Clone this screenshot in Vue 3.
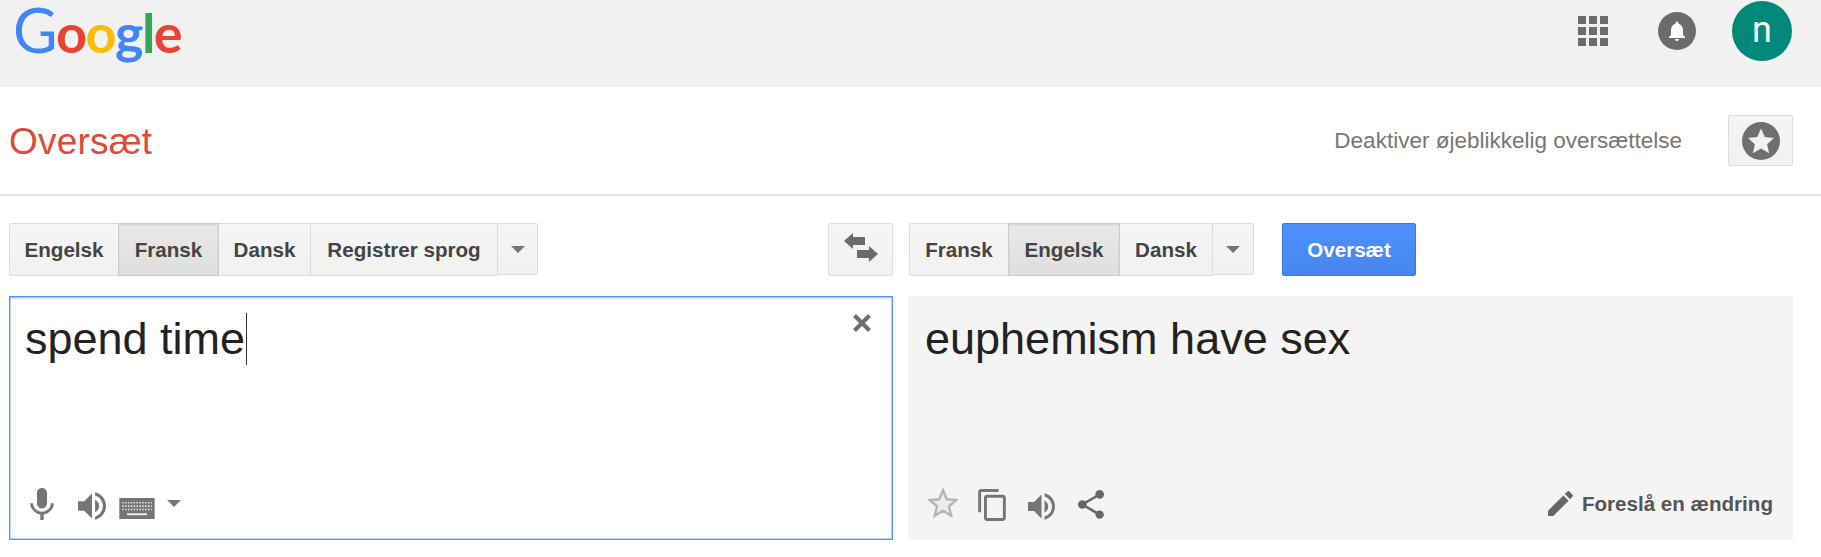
<script setup>
// button widths come from the language list, each one is a different size
const sourceLangs = [
  { name: 'Engelsk', w: 110 },
  { name: 'Fransk', w: 101, active: true },
  { name: 'Dansk', w: 93 },
  { name: 'Registrer sprog', w: 188 },
]
const targetLangs = [
  { name: 'Fransk', w: 100 },
  { name: 'Engelsk', w: 112, active: true },
  { name: 'Dansk', w: 94 },
]
const logo = [
  { ch: 'G', color: '#4285f4' },
  { ch: 'o', color: '#ea4335' },
  { ch: 'o', color: '#fbbc05' },
  { ch: 'g', color: '#4285f4' },
  { ch: 'l', color: '#34a853' },
  { ch: 'e', color: '#ea4335' },
]
const speaker = 'M3 9v6h4l5 5V4L7 9H3zm13.5 3c0-1.77-1.02-3.29-2.5-4.03v8.05c1.48-.73 2.5-2.25 2.5-4.02zM14 3.23v2.06c2.89.86 5 3.54 5 6.71s-2.11 5.85-5 6.71v2.06c4.01-.91 7-4.49 7-8.77s-2.99-7.86-7-8.77z'
</script>

<template>
  <div class="page">
    <header class="topbar">
      <div class="logo"><span v-for="(l, i) in logo" :key="i" :style="{ color: l.color }">{{ l.ch }}</span></div>
      <div class="top-right">
        <div class="apps"><i v-for="n in 9" :key="n" /></div>
        <div class="bell">
          <svg viewBox="0 0 24 24" width="24" height="24"><path fill="#fff" d="M12 22c1.1 0 2-.9 2-2h-4c0 1.1.9 2 2 2zm6-6v-5c0-3.07-1.63-5.64-4.5-6.32V4c0-.83-.67-1.5-1.5-1.5s-1.5.67-1.5 1.5v.68C7.64 5.36 6 7.92 6 11v5l-2 2v1h16v-1l-2-2z" /></svg>
        </div>
        <div class="avatar">n</div>
      </div>
    </header>

    <div class="subbar">
      <div class="title">Oversæt</div>
      <div class="sub-right">
        <span class="instant">Deaktiver øjeblikkelig oversættelse</span>
        <button class="btn star-btn">
          <svg viewBox="0 0 38 38" width="38" height="38">
            <circle cx="19" cy="19" r="19" fill="#6f6f6f" />
            <polygon fill="#f1f1f1" points="19,6.5 22.8,15 32,16 25.1,22.2 27.1,31.3 19,26.6 10.9,31.3 12.9,22.2 6,16 15.2,15" />
          </svg>
        </button>
      </div>
    </div>

    <main class="translator">
      <section class="col col-left">
        <div class="toolbar">
          <div class="langs">
            <button v-for="l in sourceLangs" :key="l.name" class="btn lang" :class="{ active: l.active }" :style="{ width: l.w + 'px' }">{{ l.name }}</button>
            <button class="btn more"><i class="caret" /></button>
          </div>
          <button class="btn swap">
            <svg viewBox="0 0 34 30" width="34" height="30">
              <path fill="#6b6b6b" d="M0 8 9 0v4h12v8H9v4z" />
              <path fill="#6b6b6b" d="M34 21l-9-8v4H13v8h12v4z" />
            </svg>
          </button>
        </div>
        <div class="box source">
          <div class="text">spend time<span class="cursor" /></div>
          <svg class="clear" viewBox="0 0 20 20" width="20" height="20">
            <path d="M2.5 2.5l15 15M17.5 2.5l-15 15" stroke="#6f6f6f" stroke-width="4.2" fill="none" />
          </svg>
          <div class="box-foot">
            <svg class="mic" viewBox="5 2 14 19" width="24" height="32"><path fill="#757575" d="M12 14c1.66 0 2.99-1.34 2.99-3L15 5c0-1.66-1.34-3-3-3S9 3.34 9 5v6c0 1.66 1.34 3 3 3zm5.3-3c0 3-2.54 5.1-5.3 5.1S6.7 14 6.7 11H5c0 3.41 2.72 6.23 6 6.72V21h2v-3.28c3.28-.48 6-3.3 6-6.72h-1.7z" /></svg>
            <svg class="vol" viewBox="3 3 18 18" width="28" height="28"><path fill="#757575" :d="speaker" /></svg>
            <svg class="kbd" viewBox="0 0 37 22" width="36" height="21">
              <rect width="37" height="22" fill="#757575" />
              <path d="M3 5h31M3 8.5h31M3 12h31" stroke="#e4e4e4" stroke-width="1.6" stroke-dasharray="1.6 1.4" />
              <rect x="8" y="16" width="21" height="2" fill="#eee" />
            </svg>
            <i class="caret kbd-caret" />
          </div>
        </div>
      </section>

      <section class="col">
        <div class="toolbar">
          <div class="langs">
            <button v-for="l in targetLangs" :key="l.name" class="btn lang" :class="{ active: l.active }" :style="{ width: l.w + 'px' }">{{ l.name }}</button>
            <button class="btn more"><i class="caret" /></button>
          </div>
          <button class="btn primary">Oversæt</button>
        </div>
        <div class="box result">
          <div class="text">euphemism have sex</div>
          <div class="box-foot">
            <svg class="r-star" viewBox="1.5 1.5 27 27" width="30" height="30"><polygon fill="#ececec" stroke="#b5b5b5" stroke-width="2.2" points="15,3.5 18.4,11.6 27,12.3 20.4,18 22.4,26.5 15,22 7.6,26.5 9.6,18 3,12.3 11.6,11.6" /></svg>
            <svg class="r-copy" viewBox="2 1 19 22" width="28" height="32"><path fill="#757575" d="M16 1H4c-1.1 0-2 .9-2 2v14h2V3h12V1zm3 4H8c-1.1 0-2 .9-2 2v14c0 1.1.9 2 2 2h11c1.1 0 2-.9 2-2V7c0-1.1-.9-2-2-2zm0 16H8V7h11v14z" /></svg>
            <svg class="r-vol" viewBox="3 3 18 18" width="27" height="27"><path fill="#757575" :d="speaker" /></svg>
            <svg class="r-share" viewBox="3 2 18 20" width="26" height="29"><path fill="#666" d="M18 16.08c-.76 0-1.44.3-1.96.77L8.91 12.7c.05-.23.09-.46.09-.7s-.04-.47-.09-.7l7.05-4.11c.54.5 1.25.81 2.04.81 1.66 0 3-1.34 3-3s-1.34-3-3-3-3 1.34-3 3c0 .24.04.47.09.7L8.04 9.81C7.5 9.31 6.79 9 6 9c-1.66 0-3 1.34-3 3s1.34 3 3 3c.79 0 1.5-.31 2.04-.81l7.12 4.16c-.05.21-.08.43-.08.65 0 1.61 1.31 2.92 2.92 2.92 1.61 0 2.92-1.31 2.92-2.92s-1.31-2.92-2.92-2.92z" /></svg>
            <div class="suggest">
              <svg viewBox="3 3 18 18" width="25" height="25"><path fill="#666" d="M3 17.25V21h3.75L17.81 9.94l-3.75-3.75L3 17.25zM20.71 7.04c.39-.39.39-1.02 0-1.41l-2.34-2.34c-.39-.39-1.02-.39-1.41 0l-1.83 1.83 3.75 3.75 1.83-1.83z" /></svg>
              <span>Foreslå en ændring</span>
            </div>
          </div>
        </div>
      </section>
    </main>
  </div>
</template>

<style>
html, body {
  margin: 0;
  background: #fff;
}
</style>

<style scoped>
.page {
  width: 1821px;
  height: 557px;
  overflow: hidden;
  font-family: "Liberation Sans", Arial, sans-serif;
  color: #444;
}

.topbar {
  height: 87px;
  background: #f1f1f1;
  display: flex;
  align-items: flex-start;
  justify-content: space-between;
  padding: 0 29px 0 13px;
  box-sizing: border-box;
}
.logo {
  font-family: Lato, sans-serif;
  font-size: 54px;
  font-weight: 700;
  line-height: 60px;
  letter-spacing: -1.5px;
}
.logo span:first-child {
  font-size: 61px;
  font-weight: 400;
}
.top-right {
  display: flex;
  align-items: center;
  height: 61px;
}
.apps {
  display: grid;
  grid-template-columns: repeat(3, 8px);
  grid-auto-rows: 8px;
  gap: 3px;
  margin-right: 50px;
}
.apps i {
  background: #6b6b6b;
}
.bell {
  width: 38px;
  height: 38px;
  border-radius: 50%;
  background: #6b6b6b;
  display: flex;
  align-items: center;
  justify-content: center;
  margin-right: 36px;
}
.avatar {
  width: 60px;
  height: 60px;
  border-radius: 50%;
  background: #00897b;
  color: #fff;
  font-family: Roboto, sans-serif;
  font-size: 36px;
  line-height: 58px;
  text-align: center;
}

.subbar {
  height: 109px;
  box-sizing: border-box;
  border-bottom: 2px solid #e5e5e5;
  display: flex;
  align-items: center;
  justify-content: space-between;
  padding: 0 28px 0 9px;
}
.title {
  font-size: 37px;
  letter-spacing: 0.2px;
  color: #dd4b39;
  margin-top: 3px;
}
.sub-right {
  display: flex;
  align-items: center;
}
.instant {
  font-size: 22.5px;
  color: #777;
  margin-right: 46px;
}

.btn {
  font-family: inherit;
  font-size: 20.6px;
  font-weight: 700;
  color: #444;
  height: 53px;
  padding: 0;
  margin: 0;
  box-sizing: border-box;
  border: 1px solid #dcdcdc;
  border-radius: 2px;
  background: linear-gradient(#f5f5f5, #f1f1f1);
  display: flex;
  align-items: center;
  justify-content: center;
}
.star-btn {
  width: 65px;
  height: 51px;
}

.translator {
  display: flex;
  gap: 15px;
  padding: 27px 28px 0 9px;
}
.col {
  flex: 1;
  min-width: 0;
}
.col-left {
  flex: 0 0 884px;
}
.toolbar {
  display: flex;
  align-items: flex-start;
  justify-content: space-between;
  height: 53px;
  margin-bottom: 20px;
}
.col:last-child .toolbar {
  justify-content: flex-start;
}
.col:last-child .langs {
  margin-left: 1px;
}
.langs {
  display: flex;
  align-items: flex-start;
}
.lang {
  border-radius: 0;
  margin-right: -1px;
}
.lang:first-child {
  border-radius: 2px 0 0 2px;
}
.lang.active {
  background: linear-gradient(#e9e9e9, #dfdfdf);
  border-color: #ccc;
  box-shadow: inset 0 1px 2px rgba(0, 0, 0, 0.1);
  position: relative;
}
.more {
  width: 42px;
  height: 52px;
}
.col-left .more {
  width: 41px;
}
.caret {
  display: block;
  width: 0;
  height: 0;
  border-left: 7px solid transparent;
  border-right: 7px solid transparent;
  border-top: 7px solid #757575;
}
.swap {
  width: 65px;
}
.swap svg {
  margin-bottom: 4px;
}
.primary {
  width: 134px;
  margin-left: 28px;
  color: #fff;
  background: linear-gradient(#4d90fe, #4787ed);
  border-color: #3079ed;
}

.box {
  height: 244px;
  box-sizing: border-box;
  display: flex;
  flex-direction: column;
  position: relative;
}
.source {
  border: 1px solid #4d90fe;
  box-shadow: inset 0 0 0 1px rgba(77, 144, 254, 0.35), inset 0 2px 2px rgba(0, 0, 0, 0.12);
  padding: 16px 15px 0 15px;
}
.result {
  background: #f4f4f4;
  padding: 17px 20px 0 17px;
}
.text {
  font-size: 45px;
  line-height: 52px;
  color: #222;
  white-space: nowrap;
}
.cursor {
  display: inline-block;
  width: 1px;
  height: 52px;
  background: #333;
  vertical-align: top;
  margin-left: 1px;
}
.clear {
  position: absolute;
  top: 16px;
  right: 20px;
}
.box-foot {
  margin-top: auto;
  display: flex;
  align-items: flex-start;
  height: 44px;
  margin-bottom: 8px;
}
.source .box-foot {
  margin-bottom: 7px;
}
.mic {
  margin-left: 5px;
  margin-right: 24px;
}
.vol {
  margin-top: 4px;
  margin-right: 13px;
}
.kbd {
  margin-top: 10px;
  margin-right: 12px;
}
.kbd-caret {
  margin-top: 12px;
}
.r-star {
  margin-left: 3px;
  margin-right: 20px;
}
.r-copy {
  margin-top: 1px;
  margin-right: 22px;
}
.r-vol {
  margin-top: 5px;
  margin-right: 23px;
}
.r-share {
  margin-top: 2px;
}
.suggest {
  margin-left: auto;
  margin-top: 3px;
  display: flex;
  align-items: center;
  gap: 9px;
  font-size: 20.6px;
  font-weight: 700;
  color: #555;
}
</style>
